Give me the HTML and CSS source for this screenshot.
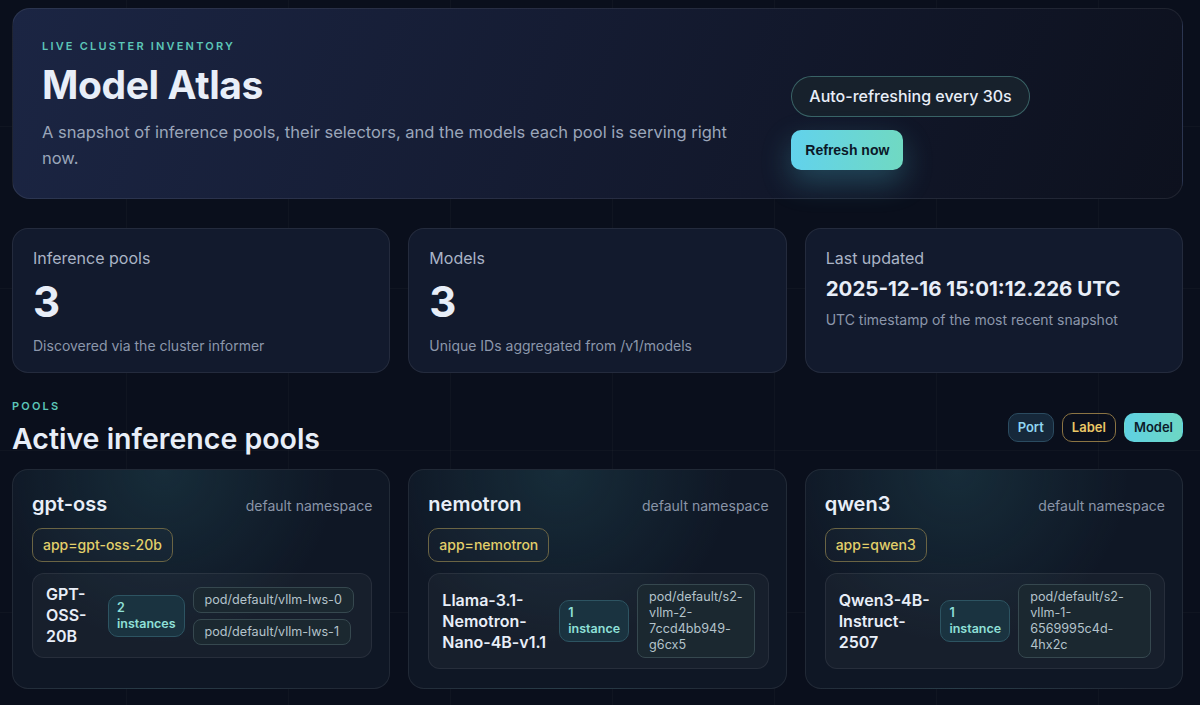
FILE: index.html
```html
<!DOCTYPE html>
<html lang="en">
  <head>
    <meta charset="UTF-8" />
    <meta name="viewport" content="width=device-width, initial-scale=1.0" />
    <title>Model Atlas</title>
    <link rel="stylesheet" href="styles.css">
  </head>
  <body>
    <div class="page">
      <header class="hero">
        <div class="hero-text">
          <p class="eyebrow">Live cluster inventory</p>
          <h1>Model Atlas</h1>
          <p class="lead">A snapshot of inference pools, their selectors, and the models each pool is serving right now.</p>
        </div>
        <div class="hero-actions">
          <span class="refresh-pill">Auto-refreshing every 30s</span>
          <button class="refresh-btn">Refresh now</button>
        </div>
      </header>

      <section class="stats">
        <div class="stat">
          <p class="stat-label">Inference pools</p>
          <p class="stat-value">3</p>
          <p class="stat-note">Discovered via the cluster informer</p>
        </div>
        <div class="stat">
          <p class="stat-label">Models</p>
          <p class="stat-value">3</p>
          <p class="stat-note">Unique IDs aggregated from /v1/models</p>
        </div>
        <div class="stat">
          <p class="stat-label">Last updated</p>
          <p class="stat-value small">2025-12-16 15:01:12.226 UTC</p>
          <p class="stat-note">UTC timestamp of the most recent snapshot</p>
        </div>
      </section>

      <section class="pools">
        <div class="pools-head">
          <div>
            <p class="eyebrow">Pools</p>
            <h2>Active inference pools</h2>
          </div>
          <div class="legend">
            <span class="tag port">Port</span>
            <span class="tag label">Label</span>
            <span class="tag model">Model</span>
          </div>
        </div>

        <div class="pool-grid">
          <div class="pool">
            <div class="pool-top">
              <h3>gpt-oss</h3>
              <span class="ns">default namespace</span>
            </div>
            <span class="selector">app=gpt-oss-20b</span>
            <div class="model-row">
              <div class="model-name">GPT-OSS-20B</div>
              <div class="count"><span>2</span><span>instances</span></div>
              <div class="pods">
                <span class="pod">pod/default/vllm-lws-0</span>
                <span class="pod">pod/default/vllm-lws-1</span>
              </div>
            </div>
          </div>

          <div class="pool">
            <div class="pool-top">
              <h3>nemotron</h3>
              <span class="ns">default namespace</span>
            </div>
            <span class="selector">app=nemotron</span>
            <div class="model-row">
              <div class="model-name">Llama-3.1-Nemotron-Nano-4B-v1.1</div>
              <div class="count"><span>1</span><span>instance</span></div>
              <div class="pods">
                <span class="pod">pod/default/s2-vllm-2-7ccd4bb949-g6cx5</span>
              </div>
            </div>
          </div>

          <div class="pool">
            <div class="pool-top">
              <h3>qwen3</h3>
              <span class="ns">default namespace</span>
            </div>
            <span class="selector">app=qwen3</span>
            <div class="model-row">
              <div class="model-name">Qwen3-4B-Instruct-2507</div>
              <div class="count"><span>1</span><span>instance</span></div>
              <div class="pods">
                <span class="pod">pod/default/s2-vllm-1-6569995c4d-4hx2c</span>
              </div>
            </div>
          </div>
        </div>
      </section>
    </div>
  </body>
</html>
```

FILE: styles.css
```css
body {
  margin: 0;
  height: 100vh;
  overflow: hidden;
  font-family: Inter, "Noto Sans", sans-serif;
  color: #e8eef8;
  background-color: #0a0f1c;
  background-image:
    linear-gradient(to right, rgba(255, 255, 255, 0.025) 1px, transparent 1px),
    linear-gradient(to bottom, rgba(255, 255, 255, 0.025) 1px, transparent 1px);
  background-size: 162px 162px;
  background-position: -36px -36px;
}
p,
h1,
h2,
h3 {
  margin: 0;
}
.page {
  padding: 8px 17px 0 12px;
}

/* hero */
.hero {
  display: grid;
  grid-template-columns: 2fr 1fr;
  gap: 24px;
  align-items: end;
  padding: 30px 28px 27px 29px;
  border: 1px solid rgba(255, 255, 255, 0.08);
  border-radius: 18px;
  background: linear-gradient(110deg, #1b2543 0%, #151c33 45%, #0d111e 100%);
}
.eyebrow {
  font-size: 11px;
  line-height: 14px;
  font-weight: 600;
  letter-spacing: 0.2em;
  text-transform: uppercase;
  color: #5cc6b8;
}
.hero h1 {
  margin-top: 10px;
  font-size: 39px;
  line-height: 44px;
  font-weight: 700;
  letter-spacing: -0.01em;
}
.lead {
  max-width: 700px;
  margin-top: 12px;
  font-size: 16.5px;
  line-height: 26px;
  color: #9ba6ba;
}
.hero-actions {
  display: flex;
  flex-direction: column;
  align-items: flex-start;
  gap: 13px;
  padding-bottom: 1px;
}
.refresh-pill {
  padding: 0 17px;
  height: 41px;
  line-height: 39px;
  box-sizing: border-box;
  border: 1px solid rgba(110, 200, 190, 0.4);
  border-radius: 999px;
  background: #17212c;
  font-size: 16px;
  font-weight: 500;
}
.refresh-btn {
  height: 40px;
  padding: 0 14px;
  border: 0;
  border-radius: 10px;
  background: linear-gradient(90deg, #62d2ec, #70d9c2);
  color: #0b1828;
  font-family: "Liberation Sans", Arial, sans-serif;
  font-size: 14px;
  font-weight: 700;
  box-shadow: 0 12px 30px rgba(80, 200, 220, 0.28);
}

/* stats */
.stats {
  display: grid;
  grid-template-columns: repeat(3, 1fr);
  gap: 18px;
  margin-top: 29px;
}
.stat {
  padding: 17px 20px 16px;
  border: 1px solid rgba(255, 255, 255, 0.08);
  border-radius: 16px;
  background: #121a2d;
}
.stat-label {
  font-size: 16px;
  line-height: 24px;
  color: #aab4c6;
}
.stat-value {
  margin-top: 10px;
  font-size: 42px;
  line-height: 44px;
  font-weight: 700;
}
.stat-value.small {
  margin-top: 4px;
  font-size: 20.5px;
  line-height: 30px;
}
.stat-note {
  margin-top: 12px;
  font-size: 14px;
  line-height: 20px;
  color: #8c97ab;
}
.stat-value.small + .stat-note {
  margin-top: 6px;
}

/* pools */
.pools {
  margin-top: 26px;
}
.pools-head {
  display: flex;
  justify-content: space-between;
  align-items: flex-end;
}
.pools h2 {
  margin-top: 8px;
  font-size: 28.5px;
  line-height: 36px;
  font-weight: 600;
}
.legend {
  display: flex;
  gap: 8px;
  margin-bottom: 15px;
}
.tag {
  height: 29px;
  line-height: 27px;
  box-sizing: border-box;
  padding: 0 9px;
  border: 1px solid transparent;
  border-radius: 10px;
  font-size: 13px;
  font-weight: 600;
}
.tag.port {
  background: #16283a;
  border-color: #2b4b60;
  color: #8fd6f2;
}
.tag.label {
  border-color: #8b7443;
  color: #eac866;
}
.tag.model {
  background: linear-gradient(90deg, #5fd1e2, #6dd7c4);
  color: #0c1b2a;
}
.pool-grid {
  display: grid;
  grid-template-columns: repeat(3, 1fr);
  gap: 18px;
  margin-top: 12px;
}
.pool {
  display: flex;
  flex-direction: column;
  align-items: flex-start;
  padding: 20px 17px 19px 19px;
  border: 1px solid rgba(255, 255, 255, 0.08);
  border-radius: 16px;
  background:
    radial-gradient(circle at 40% 0%, rgba(50, 120, 130, 0.22), transparent 55%),
    #0f1725;
}
.pool-top {
  align-self: stretch;
  display: flex;
  justify-content: space-between;
  align-items: baseline;
}
.pool h3 {
  font-size: 20px;
  line-height: 28px;
  font-weight: 600;
}
.ns {
  font-size: 14px;
  color: #8a95a8;
}
.selector {
  margin-top: 10px;
  height: 34px;
  line-height: 32px;
  box-sizing: border-box;
  padding: 0 10px;
  border: 1px solid #6a6444;
  border-radius: 10px;
  background: rgba(255, 255, 255, 0.02);
  color: #e2cf6a;
  font-size: 14px;
  font-weight: 500;
}
.model-row {
  align-self: stretch;
  display: flex;
  align-items: center;
  gap: 8px;
  margin-top: 11px;
  padding: 10px 13px;
  border: 1px solid rgba(255, 255, 255, 0.07);
  border-radius: 12px;
  background: rgba(255, 255, 255, 0.035);
}
.model-name {
  font-size: 16px;
  line-height: 21px;
  font-weight: 600;
}
.count {
  flex: none;
  display: flex;
  flex-direction: column;
  padding: 4px 8px;
  border: 1px solid #2d5462;
  border-radius: 10px;
  background: #1a3340;
  color: #8fe0d8;
  font-size: 12.5px;
  line-height: 16px;
  font-weight: 600;
}
.pods {
  display: flex;
  flex-wrap: wrap;
  column-gap: 20px;
  row-gap: 6px;
}
.pod {
  padding: 4px 11px;
  border: 1px solid #36484f;
  border-radius: 8px;
  background: #1b2830;
  color: #b4c3cb;
  font-size: 12.6px;
  line-height: 16px;
}
```
